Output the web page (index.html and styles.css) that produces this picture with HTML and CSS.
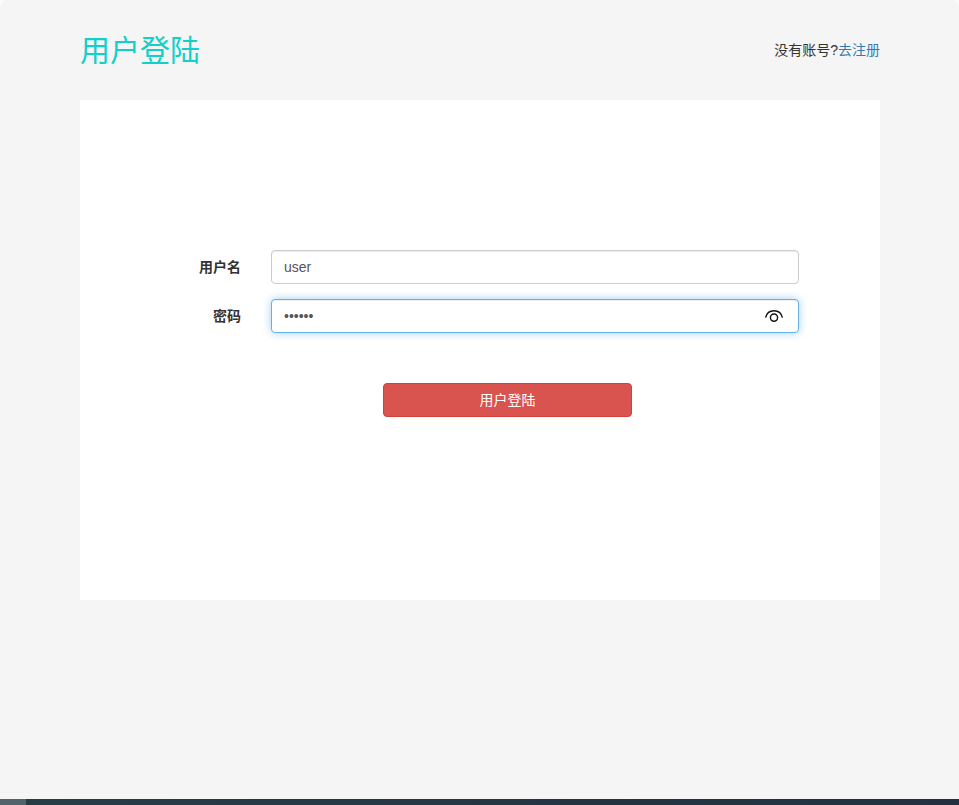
FILE: index.html
```html
<!DOCTYPE html>
<html lang="zh-CN">
<head>
  <meta charset="UTF-8">
  <title>用户登陆</title>
  <link rel="stylesheet" href="styles.css">
</head>
<body>

  <div class="page">
    <div class="header">
      <h1>用户登陆</h1>
      <p class="tip">没有账号?<a href="#">去注册</a></p>
    </div>

    <div class="main">
      <form class="login-form">
        <div class="form-group">
          <label for="username">用户名</label>
          <input type="text" id="username" class="form-control" value="user">
        </div>
        <div class="form-group">
          <label for="password">密码</label>
          <div class="form-control active">
            <input type="password" id="password" value="123456">
            <svg class="eye" width="20" height="14" viewBox="0 0 20 14" fill="none" stroke="#111" stroke-width="1.4">
              <path d="M1.6 8.6C2.6 4.4 5.8 1.8 10 1.8S17.4 4.4 18.4 8.6"/>
              <circle cx="10" cy="8.6" r="3.6"/>
            </svg>
          </div>
        </div>
        <button type="button" class="btn">用户登陆</button>
      </form>
    </div>
  </div>

  <div class="footer">
    <div class="footer-left"></div>
  </div>

</body>
</html>
```

FILE: styles.css
```css
* {
  box-sizing: border-box;
}

html {
  background-color: #fafafa;
}

body {
  margin: 0;
  height: 805px;
  display: flex;
  flex-direction: column;
  justify-content: space-between;
  overflow: hidden;
  font-family: "Liberation Sans", "Noto Sans CJK SC", sans-serif;
  font-size: 14px;
  line-height: 20px;
  color: #333;
  background-color: #f5f5f5;
  border-radius: 8px 8px 0 0;
}

.page {
  width: 800px;
  margin-left: 80px;
}

.header {
  height: 100px;
  display: flex;
  justify-content: space-between;
  align-items: center;
}

h1 {
  margin: 0;
  padding-top: 1px;
  font-size: 30px;
  font-weight: 400;
  line-height: 40px;
  color: #14cfc9;
}

.tip {
  margin: 0;
}

.tip a {
  color: #337ab7;
  text-decoration: none;
}

.main {
  height: 500px;
  padding: 150px 81px 0 80px;
  background-color: #fff;
}

.form-group {
  display: flex;
  align-items: center;
  margin-bottom: 15px;
}

label {
  width: 81px;
  margin-right: 30px;
  font-weight: bold;
  text-align: right;
}

.form-control {
  flex: 1;
  height: 34px;
  padding: 6px 12px;
  font-family: inherit;
  font-size: 14px;
  line-height: 20px;
  color: #555;
  background-color: #fff;
  border: 1px solid #ccc;
  border-radius: 4px;
  box-shadow: inset 0 1px 1px rgba(0, 0, 0, 0.075);
}

.form-control.active {
  display: flex;
  align-items: center;
  border-color: #66afe9;
  box-shadow: inset 0 1px 1px rgba(0, 0, 0, 0.075), 0 0 8px rgba(102, 175, 233, 0.6);
}

.form-control input {
  flex: 1;
  padding: 0;
  font-family: inherit;
  font-size: 14px;
  color: #555;
  background: none;
  border: none;
  outline: none;
}

.eye {
  margin-right: 2px;
}

.btn {
  display: block;
  width: 249px;
  height: 34px;
  margin: 50px 0 0 223px;
  padding: 6px 12px;
  font-family: inherit;
  font-size: 14px;
  line-height: 20px;
  color: #fff;
  background-color: #d9534f;
  border: 1px solid #d43f3a;
  border-radius: 4px;
  cursor: pointer;
}

.footer {
  height: 6px;
  background: linear-gradient(to right, #263d46, #22303f);
}

.footer-left {
  width: 26px;
  height: 6px;
  background-color: #52646b;
}
```
